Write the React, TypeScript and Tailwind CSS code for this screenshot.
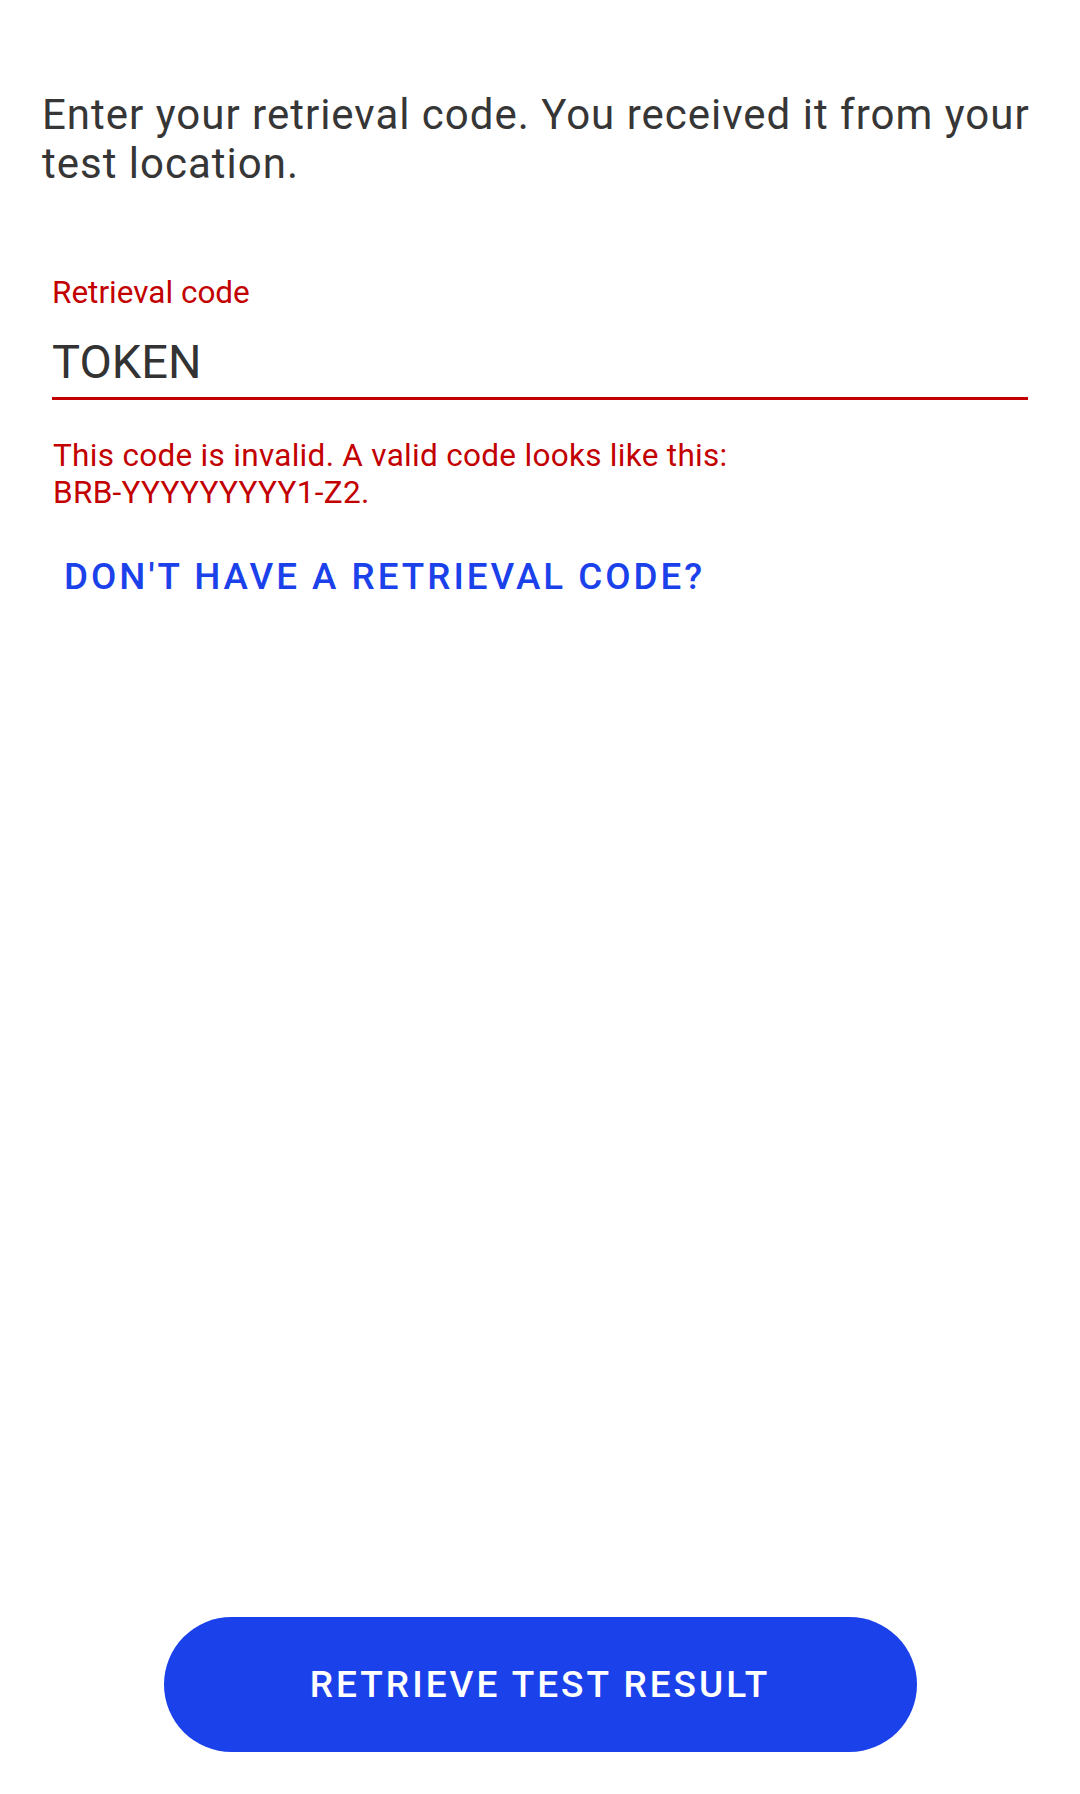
export default function App() {
  return (
    <div className="flex h-[1794px] w-[1080px] flex-col bg-white font-['Roboto',sans-serif]">
      {/* Intro */}
      <p className="px-[42px] pt-[90px] text-[42px] leading-[49px] tracking-[1px] text-[#363636]">
        Enter your retrieval code. You received it from your test location.
      </p>

      {/* Input field */}
      <div className="mx-[52px] mt-[86px]">
        <label className="block text-[31.5px] leading-[37px] text-[#C30000]">
          Retrieval code
        </label>
        <div className="mt-[24px] text-[47px] leading-[54px] text-[#333333]">TOKEN</div>
        <div className="mt-[8px] h-[3px] w-full bg-[#C30000]"></div>
      </div>

      {/* Error */}
      <p className="mx-[53px] mt-[37px] text-[31.5px] leading-[37px] tracking-[0.3px] text-[#C30000]">
        This code is invalid. A valid code looks like this:
        <br />
        BRB-YYYYYYYYY1-Z2.
      </p>

      {/* Help link */}
      <button className="ml-[64px] mt-[44px] self-start text-[36.75px] font-medium leading-[43px] tracking-[3px] text-[#1B41EB]">
        DON'T HAVE A RETRIEVAL CODE?
      </button>

      {/* Submit */}
      <div className="mt-auto flex justify-center pb-[42px]">
        <button className="flex h-[135px] w-[753px] items-center justify-center rounded-full bg-[#1B41EB] text-[37px] font-medium tracking-[3px] text-white">
          RETRIEVE TEST RESULT
        </button>
      </div>
    </div>
  );
}
